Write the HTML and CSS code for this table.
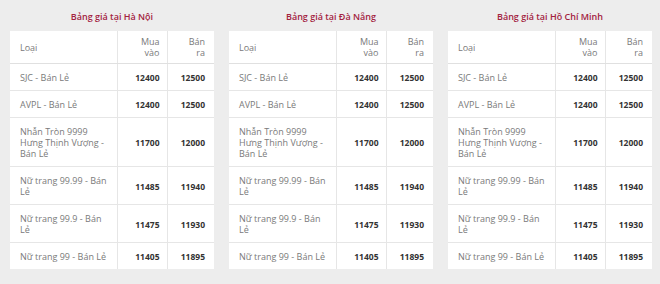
FILE: index.html
```html
<!DOCTYPE html>
<html lang="vi">
<head>
<meta charset="utf-8">
<link rel="stylesheet" href="styles.css">
</head>
<body>
<div class="boards">
  <section class="board">
    <h2 class="title">Bảng giá tại Hà Nội</h2>
    <table class="prices">
      <colgroup><col class="c1"><col class="c2"><col class="c3"></colgroup>
      <thead><tr><th>Loại</th><th class="num">Mua vào</th><th class="num">Bán ra</th></tr></thead>
      <tbody>
        <tr><td>SJC - Bán Lẻ</td><td class="num">12400</td><td class="num">12500</td></tr>
        <tr><td>AVPL - Bán Lẻ</td><td class="num">12400</td><td class="num">12500</td></tr>
        <tr><td>Nhẫn Tròn 9999 Hưng Thịnh Vượng - Bán Lẻ</td><td class="num">11700</td><td class="num">12000</td></tr>
        <tr><td>Nữ trang 99.99 - Bán Lẻ</td><td class="num">11485</td><td class="num">11940</td></tr>
        <tr><td>Nữ trang 99.9 - Bán Lẻ</td><td class="num">11475</td><td class="num">11930</td></tr>
        <tr><td>Nữ trang 99 - Bán Lẻ</td><td class="num">11405</td><td class="num">11895</td></tr>
      </tbody>
    </table>
  </section>
  <section class="board">
    <h2 class="title">Bảng giá tại Đà Nẵng</h2>
    <table class="prices">
      <colgroup><col class="c1"><col class="c2"><col class="c3"></colgroup>
      <thead><tr><th>Loại</th><th class="num">Mua vào</th><th class="num">Bán ra</th></tr></thead>
      <tbody>
        <tr><td>SJC - Bán Lẻ</td><td class="num">12400</td><td class="num">12500</td></tr>
        <tr><td>AVPL - Bán Lẻ</td><td class="num">12400</td><td class="num">12500</td></tr>
        <tr><td>Nhẫn Tròn 9999 Hưng Thịnh Vượng - Bán Lẻ</td><td class="num">11700</td><td class="num">12000</td></tr>
        <tr><td>Nữ trang 99.99 - Bán Lẻ</td><td class="num">11485</td><td class="num">11940</td></tr>
        <tr><td>Nữ trang 99.9 - Bán Lẻ</td><td class="num">11475</td><td class="num">11930</td></tr>
        <tr><td>Nữ trang 99 - Bán Lẻ</td><td class="num">11405</td><td class="num">11895</td></tr>
      </tbody>
    </table>
  </section>
  <section class="board">
    <h2 class="title">Bảng giá tại Hồ Chí Minh</h2>
    <table class="prices">
      <colgroup><col class="c1"><col class="c2"><col class="c3"></colgroup>
      <thead><tr><th>Loại</th><th class="num">Mua vào</th><th class="num">Bán ra</th></tr></thead>
      <tbody>
        <tr><td>SJC - Bán Lẻ</td><td class="num">12400</td><td class="num">12500</td></tr>
        <tr><td>AVPL - Bán Lẻ</td><td class="num">12400</td><td class="num">12500</td></tr>
        <tr><td>Nhẫn Tròn 9999 Hưng Thịnh Vượng - Bán Lẻ</td><td class="num">11700</td><td class="num">12000</td></tr>
        <tr><td>Nữ trang 99.99 - Bán Lẻ</td><td class="num">11485</td><td class="num">11940</td></tr>
        <tr><td>Nữ trang 99.9 - Bán Lẻ</td><td class="num">11475</td><td class="num">11930</td></tr>
        <tr><td>Nữ trang 99 - Bán Lẻ</td><td class="num">11405</td><td class="num">11895</td></tr>
      </tbody>
    </table>
  </section>
</div>
</body>
</html>
```
FILE: styles.css
```css
html, body {
  margin: 0;
  padding: 0;
  background: #ededed;
}
body {
  font-family: "Open Sans", "Noto Sans", sans-serif;
  font-size: 9px;
  color: #7a7a7a;
}
.boards {
  display: grid;
  grid-template-columns: 204px 204px 204px;
  column-gap: 15px;
  padding: 10px 0 0 10px;
}
.title {
  margin: 0;
  height: 21px;
  font-size: 9px;
  font-weight: 600;
  color: #a3233f;
  text-align: center;
  line-height: 14px;
}
.prices {
  width: 204px;
  border-collapse: collapse;
  table-layout: fixed;
  background: #fff;
}
.c1 { width: 107px; }
.c2 { width: 50px; }
.c3 { width: 47px; }
.prices th, .prices td {
  line-height: 11px;
  text-align: left;
  vertical-align: middle;
  border-bottom: 1px solid #e6e6e6;
  padding: 8px 7px 7px 10px;
}
.prices th {
  font-weight: 400;
  padding-top: 5px;
  padding-bottom: 5px;
  border-bottom: 1px solid #e0e0e0;
}
.prices th.num {
  padding-left: 16px;
}
.prices th + th, .prices td + td {
  border-left: 1px solid #e6e6e6;
}
.prices .num {
  text-align: right;
}
.prices td.num {
  font-weight: 700;
  color: #333;
  font-size: 8.5px;
}
.prices th:last-child, .prices td:last-child {
  padding-right: 9px;
}
.prices tbody tr:last-child td {
  border-bottom: 0;
}
```
